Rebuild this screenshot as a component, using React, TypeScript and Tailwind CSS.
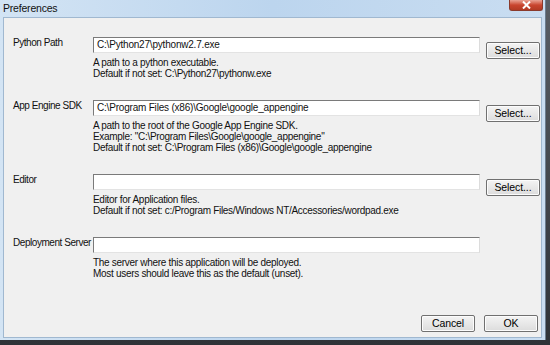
const font = { fontFamily: '"Liberation Sans", Arial, sans-serif' };

type Row = {
  label: string;
  value: string;
  help: string[];
  select?: boolean;
};

const rows: Row[] = [
  {
    label: "Python Path",
    value: "C:\\Python27\\pythonw2.7.exe",
    help: ["A path to a python executable.", "Default if not set: C:\\Python27\\pythonw.exe"],
    select: true,
  },
  {
    label: "App Engine SDK",
    value: "C:\\Program Files (x86)\\Google\\google_appengine",
    help: [
      "A path to the root of the Google App Engine SDK.",
      'Example: "C:\\Program Files\\Google\\google_appengine"',
      "Default if not set: C:\\Program Files (x86)\\Google\\google_appengine",
    ],
    select: true,
  },
  {
    label: "Editor",
    value: "",
    help: ["Editor for Application files.", "Default if not set: c:/Program Files/Windows NT/Accessories/wordpad.exe"],
    select: true,
  },
  {
    label: "Deployment Server",
    value: "",
    help: ["The server where this application will be deployed.", "Most users should leave this as the default (unset)."],
  },
];

const WinButton = ({ children }: { children: string }) => (
  <button className="w-[54px] h-[17px] shrink-0 border border-[#707070] rounded-[2px] bg-gradient-to-b from-[#f4f4f4] to-[#dcdcdc] text-[10.5px] tracking-[-0.1px] leading-none text-black shadow-[inset_0_0_0_1px_#fcfcfc]">
    {children}
  </button>
);

export default function App() {
  return (
    <div className="w-[550px] h-[345px] bg-gradient-to-b from-[#5a5f66] to-[#2f3338] overflow-hidden text-[#111]" style={font}>
      <div className="w-[546px] h-[340px] flex flex-col bg-gradient-to-r from-[#d3e4f4] via-[#bcd5ee] to-[#c9ddf1] border-r border-[#6b7d90]">
        {/* title bar */}
        <div className="relative h-[17px] shrink-0 flex items-center pl-[3px]">
          <span className="text-[10.5px] tracking-[-0.2px] leading-none">Preferences</span>
          <div className="absolute right-[2px] top-0 w-[34px] h-[11px] rounded-b-[3px] border border-t-0 border-[#8a3a2c] bg-gradient-to-b from-[#e8a193] via-[#c9452f] to-[#b23a24] flex items-center justify-center">
            <svg width="9" height="8" viewBox="0 0 9 8">
              <path d="M1 0.5 L8 7.5 M8 0.5 L1 7.5" stroke="#ffffff" strokeWidth="2" />
            </svg>
          </div>
        </div>

        {/* client area */}
        <div className="flex-1 mx-[3px] mb-[2px] border border-[#a0b8d0] bg-[#f0f0f0] flex flex-col pl-[9px] pr-[3px] pt-[19px] pb-[3px]">
          <div className="flex flex-col gap-[21px]">
            {rows.map((r) => (
              <div key={r.label} className="flex">
                <div className="w-[80px] shrink-0 text-[10px] tracking-[-0.45px] leading-[16px] -mt-[2px] whitespace-nowrap">{r.label}</div>
                <div className="w-[387px] shrink-0 flex flex-col">
                  <div className="h-[16px] border border-[#7a7a7a] border-r-[#dcdcdc] border-b-[#e3e3e3] bg-white px-[3px] text-[10px] tracking-[-0.2px] leading-[14px] whitespace-nowrap overflow-hidden">
                    {r.value}
                  </div>
                  <div className="mt-[4px] text-[10px] tracking-[-0.3px] leading-[11px] flex flex-col">
                    {r.help.map((h) => (
                      <span key={h} className="whitespace-nowrap">{h}</span>
                    ))}
                  </div>
                </div>
                {r.select && (
                  <div className="ml-[6px]">
                    <WinButton>Select...</WinButton>
                  </div>
                )}
              </div>
            ))}
          </div>
          <div className="mt-auto flex justify-end gap-[9px] pb-[2px]">
            <WinButton>Cancel</WinButton>
            <WinButton>OK</WinButton>
          </div>
        </div>
      </div>
    </div>
  );
}
